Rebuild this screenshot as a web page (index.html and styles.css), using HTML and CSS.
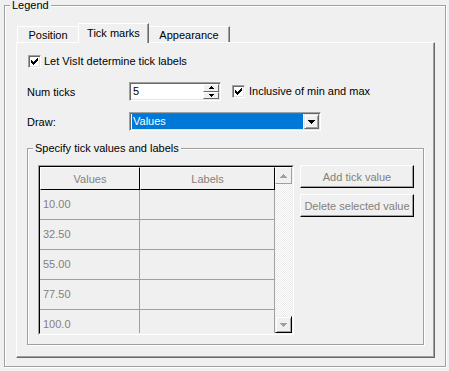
FILE: index.html
```html
<!DOCTYPE html>
<html>
<head>
<meta charset="utf-8">
<link rel="stylesheet" href="styles.css">
</head>
<body>
<fieldset class="group group-outer">
  <legend class="group-title">Legend</legend>
  <div class="outer-body">
    <div class="tabs">
      <div class="tab tab-first">Position</div>
      <div class="tab tab-active">Tick marks</div>
      <div class="tab tab-last">Appearance</div>
    </div>
    <div class="pane">
      <div class="check-row">
        <span class="checkbox"><svg width="7" height="7" viewBox="0 0 7 7" shape-rendering="crispEdges"><rect x="0" y="2" width="1" height="3"/><rect x="1" y="3" width="1" height="3"/><rect x="2" y="4" width="1" height="3"/><rect x="3" y="3" width="1" height="3"/><rect x="4" y="2" width="1" height="3"/><rect x="5" y="1" width="1" height="3"/><rect x="6" y="0" width="1" height="3"/></svg></span>
        <span class="check-text">Let VisIt determine tick labels</span>
      </div>
      <div class="form-row row-num">
        <span class="field-label">Num ticks</span>
        <div class="spinbox">
          <span class="spin-value">5</span>
          <div class="spin-buttons">
            <span class="spin-btn"><svg width="5" height="3" viewBox="0 0 5 3" shape-rendering="crispEdges"><rect x="2" y="0" width="1" height="1"/><rect x="1" y="1" width="3" height="1"/><rect x="0" y="2" width="5" height="1"/></svg></span>
            <span class="spin-btn"><svg width="5" height="3" viewBox="0 0 5 3" shape-rendering="crispEdges"><rect x="0" y="0" width="5" height="1"/><rect x="1" y="1" width="3" height="1"/><rect x="2" y="2" width="1" height="1"/></svg></span>
          </div>
        </div>
        <div class="check-row check-inline">
          <span class="checkbox"><svg width="7" height="7" viewBox="0 0 7 7" shape-rendering="crispEdges"><rect x="0" y="2" width="1" height="3"/><rect x="1" y="3" width="1" height="3"/><rect x="2" y="4" width="1" height="3"/><rect x="3" y="3" width="1" height="3"/><rect x="4" y="2" width="1" height="3"/><rect x="5" y="1" width="1" height="3"/><rect x="6" y="0" width="1" height="3"/></svg></span>
          <span class="check-text">Inclusive of min and max</span>
        </div>
      </div>
      <div class="form-row row-draw">
        <span class="field-label">Draw:</span>
        <div class="combo">
          <span class="combo-value">Values</span>
          <span class="combo-btn"><svg width="7" height="4" viewBox="0 0 7 4" shape-rendering="crispEdges"><rect x="0" y="0" width="7" height="1"/><rect x="1" y="1" width="5" height="1"/><rect x="2" y="2" width="3" height="1"/><rect x="3" y="3" width="1" height="1"/></svg></span>
        </div>
      </div>
      <fieldset class="group group-inner">
        <legend class="group-title">Specify tick values and labels</legend>
        <div class="inner-body">
          <div class="table-frame">
            <div class="table-inner">
              <div class="grid">
                <div class="grid-head">
                  <div class="head-cell head-values">Values</div>
                  <div class="head-cell head-labels">Labels</div>
                </div>
                <div class="grid-row"><div class="cell cell-values">10.00</div><div class="cell cell-labels"></div></div>
                <div class="grid-row"><div class="cell cell-values">32.50</div><div class="cell cell-labels"></div></div>
                <div class="grid-row"><div class="cell cell-values">55.00</div><div class="cell cell-labels"></div></div>
                <div class="grid-row"><div class="cell cell-values">77.50</div><div class="cell cell-labels"></div></div>
                <div class="grid-row"><div class="cell cell-values">100.0</div><div class="cell cell-labels"></div></div>
              </div>
              <div class="vscroll">
                <span class="sb-btn sb-up"><svg width="7" height="4" viewBox="0 0 7 4" shape-rendering="crispEdges"><rect x="3" y="0" width="1" height="1"/><rect x="2" y="1" width="3" height="1"/><rect x="1" y="2" width="5" height="1"/><rect x="0" y="3" width="7" height="1"/></svg></span>
                <span class="sb-btn sb-down"><svg width="7" height="4" viewBox="0 0 7 4" shape-rendering="crispEdges"><rect x="0" y="0" width="7" height="1"/><rect x="1" y="1" width="5" height="1"/><rect x="2" y="2" width="3" height="1"/><rect x="3" y="3" width="1" height="1"/></svg></span>
              </div>
            </div>
          </div>
          <div class="side-buttons">
            <button class="btn" disabled>Add tick value</button>
            <button class="btn" disabled>Delete selected value</button>
          </div>
        </div>
      </fieldset>
    </div>
  </div>
</fieldset>
</body>
</html>
```

FILE: styles.css
```css
* { box-sizing: border-box; }

body {
  margin: 0;
  width: 449px;
  height: 371px;
  overflow: hidden;
  background: #f0f0f0;
  font-family: "Liberation Sans", Arial, sans-serif;
  font-size: 11px;
  color: #000;
}

.group {
  margin: 0;
  padding: 0;
  min-width: 0;
  border: 1px solid #a0a0a0;
  box-shadow: inset 1px 1px #fff, 1px 1px #fff;
}

.group-title {
  margin-left: 5px;
  padding: 0 2px;
  height: 11px;
  line-height: 11px;
  background: #f0f0f0;
}

.group-outer {
  margin-left: 4px;
  width: 442px;
  height: 367px;
}

.outer-body {
  padding: 12px 10px 0 11px;
}

/* tabs */
.tabs {
  display: flex;
  align-items: flex-end;
  height: 19px;
  padding-left: 1px;
}

.tab {
  height: 16px;
  padding-top: 2px;
  line-height: 13px;
  text-align: center;
  background: #f0f0f0;
  border-top: 1px solid #fff;
}

.tab-first {
  width: 61px;
  border-left: 1px solid #fff;
}

.tab-active {
  position: relative;
  z-index: 1;
  width: 71px;
  height: 20px;
  margin-bottom: -1px;
  padding-top: 3px;
  border-left: 1px solid #fff;
  border-right: 1px solid #696969;
  box-shadow: inset -1px 0 #a0a0a0;
}

.tab-last {
  width: 81px;
  border-right: 1px solid #696969;
  box-shadow: inset -1px 0 #a0a0a0;
}

.pane {
  width: 419px;
  height: 316px;
  border: 1px solid;
  border-color: #fff #696969 #696969 #fff;
  box-shadow: inset -1px -1px #a0a0a0;
  padding: 12px 0 0 10px;
  display: flex;
  flex-direction: column;
  align-items: flex-start;
}

/* checkboxes */
.check-row {
  display: flex;
  align-items: center;
  gap: 3px;
  height: 13px;
  line-height: 13px;
  margin-left: 1px;
}

.check-inline {
  margin-left: 11px;
  gap: 4px;
}

.checkbox {
  width: 13px;
  height: 13px;
  display: flex;
  align-items: center;
  justify-content: center;
  background: #fff;
  border: 1px solid;
  border-color: #a0a0a0 #fff #fff #a0a0a0;
  box-shadow: inset 1px 1px #696969, inset -1px -1px #e3e3e3;
}

.checkbox svg { fill: #000; }

/* form rows */
.form-row {
  display: flex;
  align-items: center;
  height: 19px;
}

.row-num { margin-top: 14px; }
.row-draw { margin-top: 11px; }

.field-label { width: 102px; }

.spinbox {
  width: 92px;
  height: 19px;
  display: flex;
  align-items: stretch;
  background: #fff;
  border: 1px solid;
  border-color: #a0a0a0 #fff #fff #a0a0a0;
  box-shadow: inset 1px 1px #696969, inset -1px -1px #e3e3e3;
  padding: 1px;
}

.spin-value {
  flex: 1;
  padding-left: 2px;
  line-height: 15px;
}

.spin-buttons {
  width: 16px;
  display: flex;
  flex-direction: column;
}

.spin-btn {
  flex: 1;
  display: flex;
  align-items: center;
  justify-content: center;
  background: #f0f0f0;
  border: 1px solid;
  border-color: #fff #696969 #696969 #fff;
}

.spin-btn svg { fill: #000; }

.combo {
  width: 192px;
  height: 19px;
  display: flex;
  align-items: stretch;
  background: #fff;
  border: 1px solid;
  border-color: #a0a0a0 #fff #fff #a0a0a0;
  box-shadow: inset 1px 1px #696969, inset -1px -1px #e3e3e3;
  padding: 1px;
}

.combo-value {
  flex: 1;
  margin: 0 1px;
  padding-left: 1px;
  background: #0078d7;
  color: #fff;
  line-height: 15px;
}

.combo-btn {
  width: 15px;
  display: flex;
  align-items: center;
  justify-content: center;
  background: #f0f0f0;
  border: 1px solid;
  border-color: #e3e3e3 #696969 #696969 #e3e3e3;
  box-shadow: inset 1px 1px #fff, inset -1px -1px #a0a0a0;
}

.combo-btn svg { fill: #000; }

/* inner group */
.group-inner {
  margin-top: 12px;
  width: 397px;
  height: 202px;
}

.inner-body {
  display: flex;
  align-items: flex-start;
  padding: 11px 0 0 10px;
}

.table-frame {
  width: 256px;
  height: 170px;
  border: 1px solid;
  border-color: #a0a0a0 #fff #fff #a0a0a0;
}

.table-inner {
  height: 100%;
  display: flex;
  border: 1px solid;
  border-color: #000 #f0f0f0 #f0f0f0 #000;
}

.grid {
  width: 235px;
  height: 166px;
  overflow: hidden;
  color: #85807b;
}

.grid-head {
  display: flex;
  height: 23px;
}

.head-cell {
  display: flex;
  align-items: center;
  justify-content: center;
  border: 1px solid;
  border-color: #fff #000 #000 #fff;
}

.head-values { width: 100px; }
.head-labels { width: 135px; }

.grid-row {
  display: flex;
  height: 30px;
  flex-shrink: 0;
  border-bottom: 1px solid #a0a0a0;
}

.cell {
  border-right: 1px solid #a0a0a0;
  line-height: 29px;
  padding-left: 3px;
}

.cell-values { width: 100px; }
.cell-labels { width: 135px; }

.vscroll {
  width: 17px;
  height: 166px;
  display: flex;
  flex-direction: column;
  justify-content: space-between;
  background: repeating-conic-gradient(#fff 0 25%, #ebebeb 0 50%) 0 0 / 2px 2px;
}

.sb-btn {
  width: 17px;
  height: 17px;
  display: flex;
  align-items: center;
  justify-content: center;
  background: #f0f0f0;
  border: 1px solid;
}

.sb-btn svg { fill: #a0a0a0; }

.sb-up {
  border-color: #fff #a0a0a0 #a0a0a0 #fff;
}

.sb-down {
  border-color: #f0f0f0 #000 #000 #f0f0f0;
  box-shadow: inset 1px 1px #fff, inset -1px -1px #a0a0a0;
}

.side-buttons {
  display: flex;
  flex-direction: column;
  gap: 6px;
  margin-left: 6px;
}

.btn {
  width: 114px;
  height: 23px;
  padding: 0;
  font: inherit;
  color: #85807b;
  background: #f0f0f0;
  border: 1px solid;
  border-color: #fff #000 #000 #fff;
  box-shadow: inset -1px -1px #a0a0a0;
}
```
